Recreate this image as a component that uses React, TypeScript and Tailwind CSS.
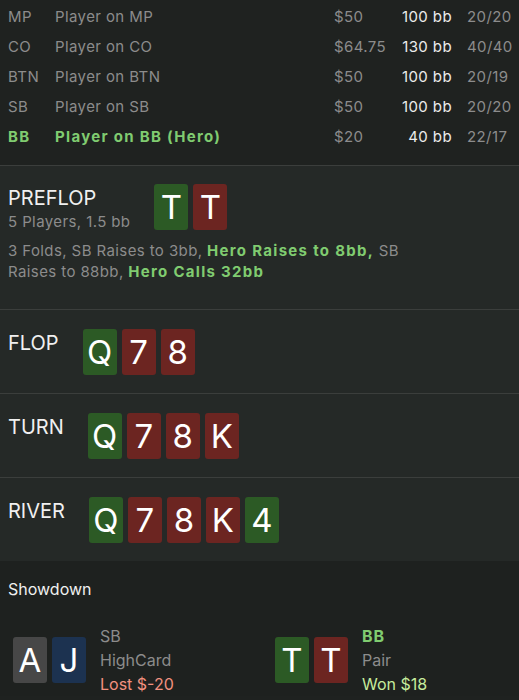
const players = [
  { pos: "MP", name: "Player on MP", usd: "$50", bb: "100 bb", stat: "20/20" },
  { pos: "CO", name: "Player on CO", usd: "$64.75", bb: "130 bb", stat: "40/40" },
  { pos: "BTN", name: "Player on BTN", usd: "$50", bb: "100 bb", stat: "20/19" },
  { pos: "SB", name: "Player on SB", usd: "$50", bb: "100 bb", stat: "20/20" },
  { pos: "BB", name: "Player on BB (Hero)", usd: "$20", bb: "40 bb", stat: "22/17", hero: true },
];

type Suit = "g" | "r" | "k" | "b";

const suitBg: Record<Suit, string> = {
  g: "bg-[#2c5a25]",
  r: "bg-[#6c2521]",
  k: "bg-[#474747]",
  b: "bg-[#1c3250]",
};

const hero = "text-[#80cc70] font-bold tracking-[1.3px]";

function Card({ rank, suit }: { rank: string; suit: Suit }) {
  return (
    <div
      className={`${suitBg[suit]} w-[34px] h-[46px] rounded-[3px] flex items-center justify-center text-white text-[33px] leading-none tracking-normal`}
    >
      {rank}
    </div>
  );
}

function Cards({ cards }: { cards: [string, Suit][] }) {
  return (
    <div className="flex gap-[5px]">
      {cards.map(([r, s], i) => (
        <Card key={i} rank={r} suit={s} />
      ))}
    </div>
  );
}

function Street({ label, cards }: { label: string; cards: [string, Suit][] }) {
  return (
    <section className="bg-[#252927] border-t border-[#3b3e3c] px-2 pt-[19px] pb-[18px] flex gap-6">
      <div className="text-[20px] leading-[28px] text-[#f0f0f0] tracking-normal">{label}</div>
      <Cards cards={cards} />
    </section>
  );
}

export default function App() {
  return (
    <div className="w-[519px] h-[700px] overflow-hidden bg-[#1f2220] font-['Inter',sans-serif] text-[15px] tracking-[0.4px]">
      {/* Players */}
      <div className="pt-[2px] pb-[13px]">
        {players.map((p) => (
          <div key={p.pos} className="flex items-center h-[30px] pl-2">
            <div className={`w-[47px] ${p.hero ? hero : "text-[#8c8c8c]"}`}>{p.pos}</div>
            <div className={`flex-1 ${p.hero ? hero : "text-[#8c8c8c]"}`}>{p.name}</div>
            <div className="w-[62px] text-[#8c8c8c]">{p.usd}</div>
            <div className="w-[56px] text-right text-[#ececec]">{p.bb}</div>
            <div className="w-[52px] ml-[15px] text-[#8c8c8c]">{p.stat}</div>
          </div>
        ))}
      </div>

      {/* Preflop */}
      <section className="bg-[#252927] border-t border-[#3b3e3c] px-2 pt-[18px] pb-[27px]">
        <div className="flex gap-6">
          <div>
            <div className="text-[20px] leading-[28px] text-[#f0f0f0] tracking-normal">PREFLOP</div>
            <div className="leading-[20px] text-[#8c8c8c]">5 Players, 1.5 bb</div>
          </div>
          <Cards cards={[["T", "g"], ["T", "r"]]} />
        </div>
        <p className="mt-[8px] leading-[21px] text-[#8c8c8c] pr-24">
          3 Folds, SB Raises to 3bb, <span className={hero}>Hero Raises to 8bb,</span> SB Raises to 88bb,{" "}
          <span className={hero}>Hero Calls 32bb</span>
        </p>
      </section>

      <Street label="FLOP" cards={[["Q", "g"], ["7", "r"], ["8", "r"]]} />
      <Street label="TURN" cards={[["Q", "g"], ["7", "r"], ["8", "r"], ["K", "r"]]} />
      <Street label="RIVER" cards={[["Q", "g"], ["7", "r"], ["8", "r"], ["K", "r"], ["4", "g"]]} />

      {/* Showdown */}
      <section className="bg-[#1e211f] pt-[16px] tracking-normal">
        <div className="px-2 text-[16px] leading-[24px] text-[#f0f0f0]">Showdown</div>
        <div className="flex mt-[23px] pl-[13px] text-[16px] leading-[24px]">
          <div className="w-[262px] flex items-center gap-[14px]">
            <Cards cards={[["A", "k"], ["J", "b"]]} />
            <div>
              <div className="text-[#8c8c8c]">SB</div>
              <div className="text-[#8c8c8c]">HighCard</div>
              <div className="text-[#f2917f]">Lost $-20</div>
            </div>
          </div>
          <div className="flex items-center gap-[14px]">
            <Cards cards={[["T", "g"], ["T", "r"]]} />
            <div>
              <div className="font-bold text-[#80cc70] tracking-[1px]">BB</div>
              <div className="text-[#8c8c8c]">Pair</div>
              <div className="text-[#c6ec9c]">Won $18</div>
            </div>
          </div>
        </div>
      </section>
    </div>
  );
}
